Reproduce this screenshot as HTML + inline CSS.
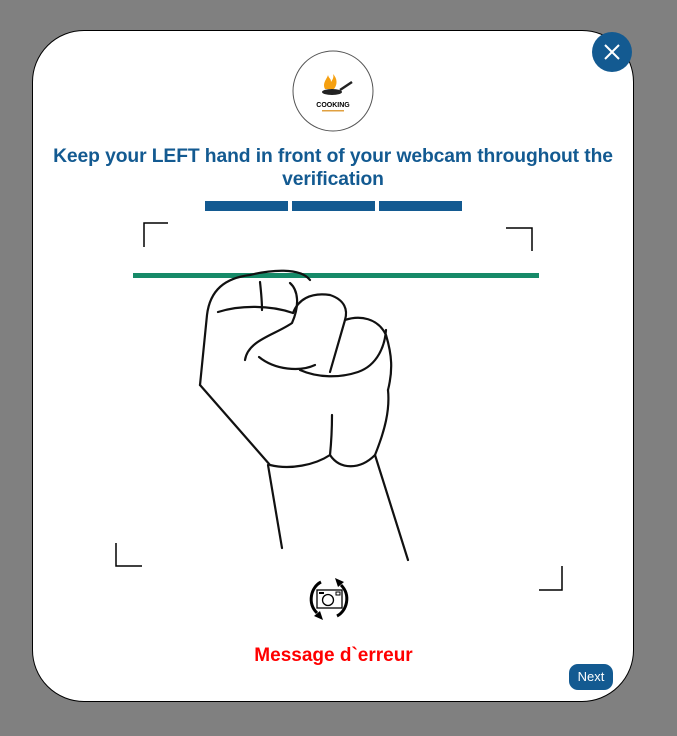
<!DOCTYPE html>
<html><head><style>
body{margin:0;width:677px;height:736px;background:#808080;position:relative;overflow:hidden;font-family:"Liberation Sans",sans-serif}
.card{position:absolute;left:32px;top:30px;width:600px;height:670px;background:#fff;border:1px solid #000;border-radius:52px}
.close{position:absolute;left:592px;top:32px;width:40px;height:40px;border-radius:50%;background:#135a91}
.title{position:absolute;left:30px;width:606px;top:145px;text-align:center;color:#135a91;font-weight:bold;font-size:19.3px;line-height:23px;letter-spacing:-0.1px}
.bar{position:absolute;top:201px;height:10px;width:83px;background:#135a91}
.err{position:absolute;left:0;width:667px;top:645px;text-align:center;color:#f00;font-size:19px;font-weight:bold}
.next{position:absolute;left:569px;top:664px;width:44px;height:26px;border-radius:9px;background:#135a91;color:#fff;font-size:13px;text-align:center;line-height:26px}
</style></head><body>
<div class="card"></div>
<div class="close"><svg width="40" height="40"><path d="M13 13L27 27M27 13L13 27" stroke="#fff" stroke-width="2"/></svg></div>
<svg style="position:absolute;left:292px;top:50px" width="84" height="84">
<circle cx="41" cy="41" r="40" fill="#fff" stroke="#555" stroke-width="1"/>
<path d="M33 39c-3-6 2-10 3-14 1 4 3 3 3 7 2-3 3-5 2-8 4 4 5 10 1 15z" fill="#f5a011"/>
<ellipse cx="40" cy="42" rx="10" ry="3" fill="#222"/><path d="M48 40L60 32" stroke="#222" stroke-width="2.5"/>
<text x="41" y="57" font-size="7" font-weight="bold" text-anchor="middle" font-family="Liberation Sans">COOKING</text>
<rect x="30" y="60" width="22" height="1.5" fill="#e0a040"/>
</svg>
<div class="title">Keep your LEFT hand in front of your webcam throughout the verification</div>
<div class="bar" style="left:205px"></div><div class="bar" style="left:292px"></div><div class="bar" style="left:379px"></div>
<svg style="position:absolute;left:0;top:0" width="677" height="736">
<g stroke="#000" stroke-width="1.5" fill="none">
<path d="M144 247V223H168"/><path d="M506 228H532V251"/><path d="M116 543V566H142"/><path d="M562 566V590H539"/>
</g>
<rect x="133" y="273" width="406" height="5" fill="#168a68"/>
<g stroke="#111" stroke-width="2.2" fill="none" stroke-linecap="round">
<path d="M200 385L207 315C210 290 225 278 250 275C270 270 300 267 310 280"/>
<path d="M218 312C240 305 270 305 293 313"/>
<path d="M245 360C248 340 275 335 292 323C300 305 298 290 290 283"/>
<path d="M260 282C262 300 262 310 262 310"/>
<path d="M259 357C275 370 300 372 315 365"/>
<path d="M300 370C318 378 340 378 358 372C378 365 385 345 386 330"/>
<path d="M293 313C298 300 310 292 330 295C345 300 348 310 345 320L330 372"/>
<path d="M345 320C360 315 378 318 386 335C392 355 393 370 388 390"/>
<path d="M200 385L270 465C290 470 315 465 330 455C340 470 360 470 375 455C385 430 390 410 388 390"/>
<path d="M330 455C332 435 332 420 332 415"/>
<path d="M268 465L282 548"/>
<path d="M375 455L408 560"/>
</g>
<g transform="translate(309,579)">
<rect x="8" y="11" width="25" height="18" fill="none" stroke="#000" stroke-width="1.3"/>
<circle cx="19" cy="21" r="5.5" fill="none" stroke="#000" stroke-width="1.3"/>
<rect x="10" y="13" width="5" height="2" fill="#000"/><rect x="27" y="13" width="4" height="3" fill="none" stroke="#000"/>
<path d="M12 3C2 8 -2 24 8 34" stroke="#000" stroke-width="3" fill="none"/>
<path d="M5 37L14 41L11 32Z" fill="#000"/>
<path d="M28 37C38 32 42 16 32 6" stroke="#000" stroke-width="3" fill="none"/>
<path d="M35 3L26 -1L29 8Z" fill="#000"/>
</g>
</svg>
<div class="err">Message d`erreur</div>
<div class="next">Next</div>
</body></html>
